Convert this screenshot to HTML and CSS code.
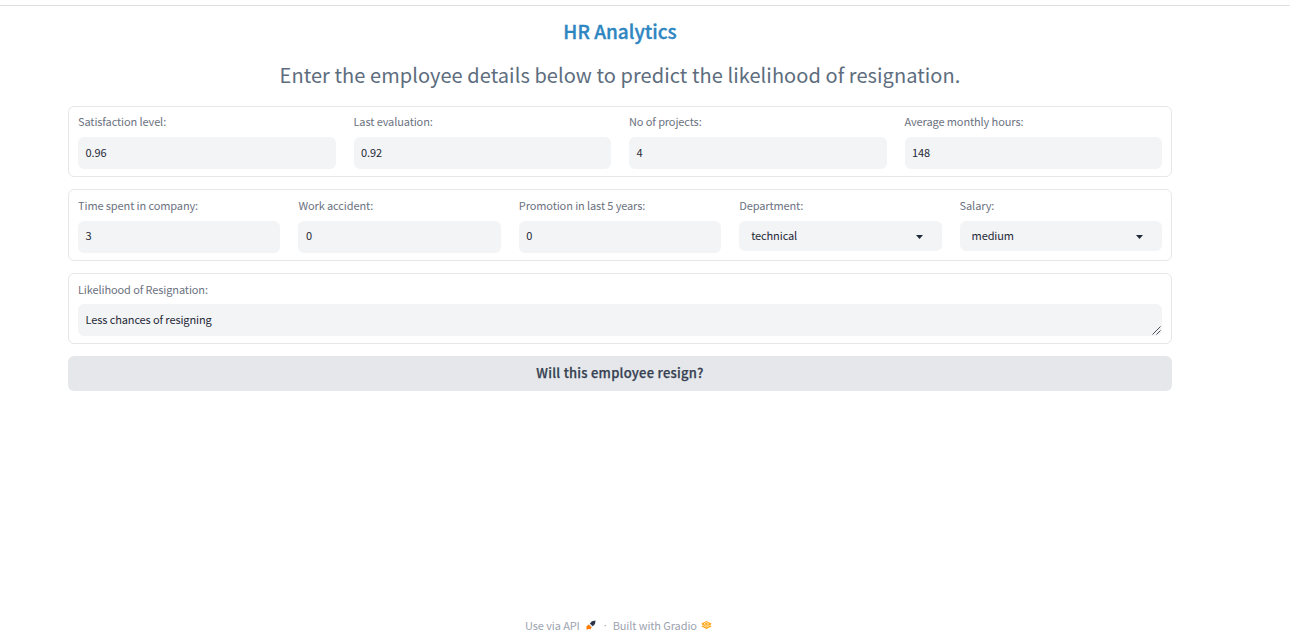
FILE: index.html
```html
<!DOCTYPE html>
<html lang="en">
<head>
<meta charset="utf-8">
<title>HR Analytics</title>
<link rel="stylesheet" href="styles.css">
</head>
<body>
<div class="topline"></div>
<main class="container">
  <h1 class="title"><span>HR Analytics</span></h1>
  <p class="subtitle"><span>Enter the employee details below to predict the likelihood of resignation.</span></p>
  <section class="panel cols-4">
    <div class="field"><div class="label"><span>Satisfaction level:</span></div><div class="input">0.96</div></div>
    <div class="field"><div class="label"><span>Last evaluation:</span></div><div class="input">0.92</div></div>
    <div class="field"><div class="label"><span>No of projects:</span></div><div class="input">4</div></div>
    <div class="field"><div class="label"><span>Average monthly hours:</span></div><div class="input">148</div></div>
  </section>
  <section class="panel cols-5">
    <div class="field"><div class="label"><span>Time spent in company:</span></div><div class="input">3</div></div>
    <div class="field"><div class="label"><span>Work accident:</span></div><div class="input">0</div></div>
    <div class="field"><div class="label"><span>Promotion in last 5 years:</span></div><div class="input">0</div></div>
    <div class="field"><div class="label"><span>Department:</span></div><div class="input select"><span>technical</span><svg class="caret" viewBox="0 0 7 4"><path d="M0 0h7L3.500 4z"/></svg></div></div>
    <div class="field"><div class="label"><span>Salary:</span></div><div class="input select"><span>medium</span><svg class="caret" viewBox="0 0 7 4"><path d="M0 0h7L3.500 4z"/></svg></div></div>
  </section>
  <section class="panel result">
    <div class="field"><div class="label"><span>Likelihood of Resignation:</span></div><div class="input area"><span>Less chances of resigning</span><svg class="grip" viewBox="0 0 9 9"><path d="M.5 8.5l8-8M4.5 8.5l4-4"/></svg></div></div>
  </section>
  <button class="submit"><span>Will this employee resign?</span></button>
</main>
<footer class="footer">
  <span class="link">Use via API</span>
  <svg class="rocket" viewBox="0 0 10 10"><path fill="#ff7c00" d="M.5 6.200L2.800 4.400 5.800 7.200 4.500 9.300 2.500 9 .5 9.800z"/><path fill="#dfe3ea" d="M2.900 4.400l1-.9L6.800 6.200l-1 1z"/><path fill="#2b3448" d="M3.900 3.500L6 1.200l3.500-.7-.5 3.500L6.800 6.200z"/></svg>
  <span class="dot">·</span>
  <span class="link built">Built with Gradio</span>
  <svg class="logo" viewBox="0 0 11 10"><path fill="#ffa51c" d="M.5 3.500L5.500 1l5 2.500L9.700 5l.8 1.500-5 2.500-5-2.500L1.300 5z"/><path fill="none" stroke="#ffe9b8" stroke-width=".9" d="M3 3.600l2.500-1.100L8 3.600M1 5l4.500 2L10 5M3.500 4.500l2 .9 2-.9"/></svg>
</footer>
</body>
</html>
```
FILE: styles.css
```css
* { box-sizing: border-box; }
body {
  margin: 0;
  height: 639px;
  display: flex;
  flex-direction: column;
  overflow: hidden;
  background: #fff;
  color: #1f2937;
  font-family: "Noto Sans CJK SC", "Noto Sans", sans-serif;
  font-size: 11px;
  letter-spacing: -.11px;
}
.topline { height: 6px; border-bottom: 1px solid #e0e0e0; }
.container {
  width: 1104px;
  margin-left: 68px;
  display: flex;
  flex-direction: column;
}
.title {
  margin: 11px 0 0;
  height: 30px;
  line-height: 28px;
  text-align: center;
  font-size: 19px;
  font-weight: 500;
  letter-spacing: 0;
  -webkit-text-stroke: .35px #2e86c1;
  color: #2e86c1;
}
.subtitle {
  margin: 13px 0 0;
  height: 30px;
  line-height: 30px;
  text-align: center;
  font-size: 20px;
  letter-spacing: .065px;
  color: #5d6d7e;
}
.panel {
  display: grid;
  margin-top: 12px;
  height: 72px;
  border: 1px solid #e5e7eb;
  border-radius: 6px;
}
.cols-4 { grid-template-columns: repeat(4, 1fr); margin-top: 16px; height: 71px; }
.cols-5 { grid-template-columns: repeat(5, 1fr); }
.result { height: 71px; }
.field { padding: 6px 9px 0; min-width: 0; }
.cols-5 .field { padding-top: 7px; }
.label { height: 18px; line-height: 16px; color: #6b7280; white-space: nowrap; }
.input {
  height: 32px;
  margin-top: 6px;
  padding: 0 7.5px;
  border-radius: 6px;
  background: #f3f4f6;
  line-height: 30px;
}
.result .label { line-height: 18px; }
.cols-5 .input { line-height: 28px; }
.cols-5 .select {
  height: 30px;
  padding: 0 19px 0 12px;
  display: flex;
  justify-content: space-between;
}
.caret { width: 7px; height: 4px; fill: #1f2937; margin-top: 14px; }
.area { display: flex; justify-content: space-between; padding-right: 0; }
.grip { width: 9px; height: 9px; margin: 22px 1px 0 0; fill: none; stroke: #4b4b55; stroke-width: 1; }
.submit {
  margin: 12px 0 0;
  padding: 0;
  height: 35px;
  border: 0;
  border-radius: 6px;
  background: #e5e7eb;
  color: #374151;
  font-family: inherit;
  font-size: 13px;
  font-weight: 500;
  letter-spacing: .25px;
  -webkit-text-stroke: .25px #374151;
  line-height: 34px;
}
.submit span { display: block; height: 35px; }
.footer {
  margin-top: auto;
  padding-left: 525px;
  height: 26px;
  display: flex;
  align-items: center;
  line-height: 26px;
  padding-bottom: 2px;
  color: #9ca3af;
  white-space: nowrap;
}
.rocket { width: 10px; height: 10px; margin-left: 6px; }
.dot { margin-left: 8px; width: 3px; font-family: "Open Sans", sans-serif; }
.built { margin-left: 6px; }
.logo { width: 11px; height: 10px; margin-left: 4px; }
```
